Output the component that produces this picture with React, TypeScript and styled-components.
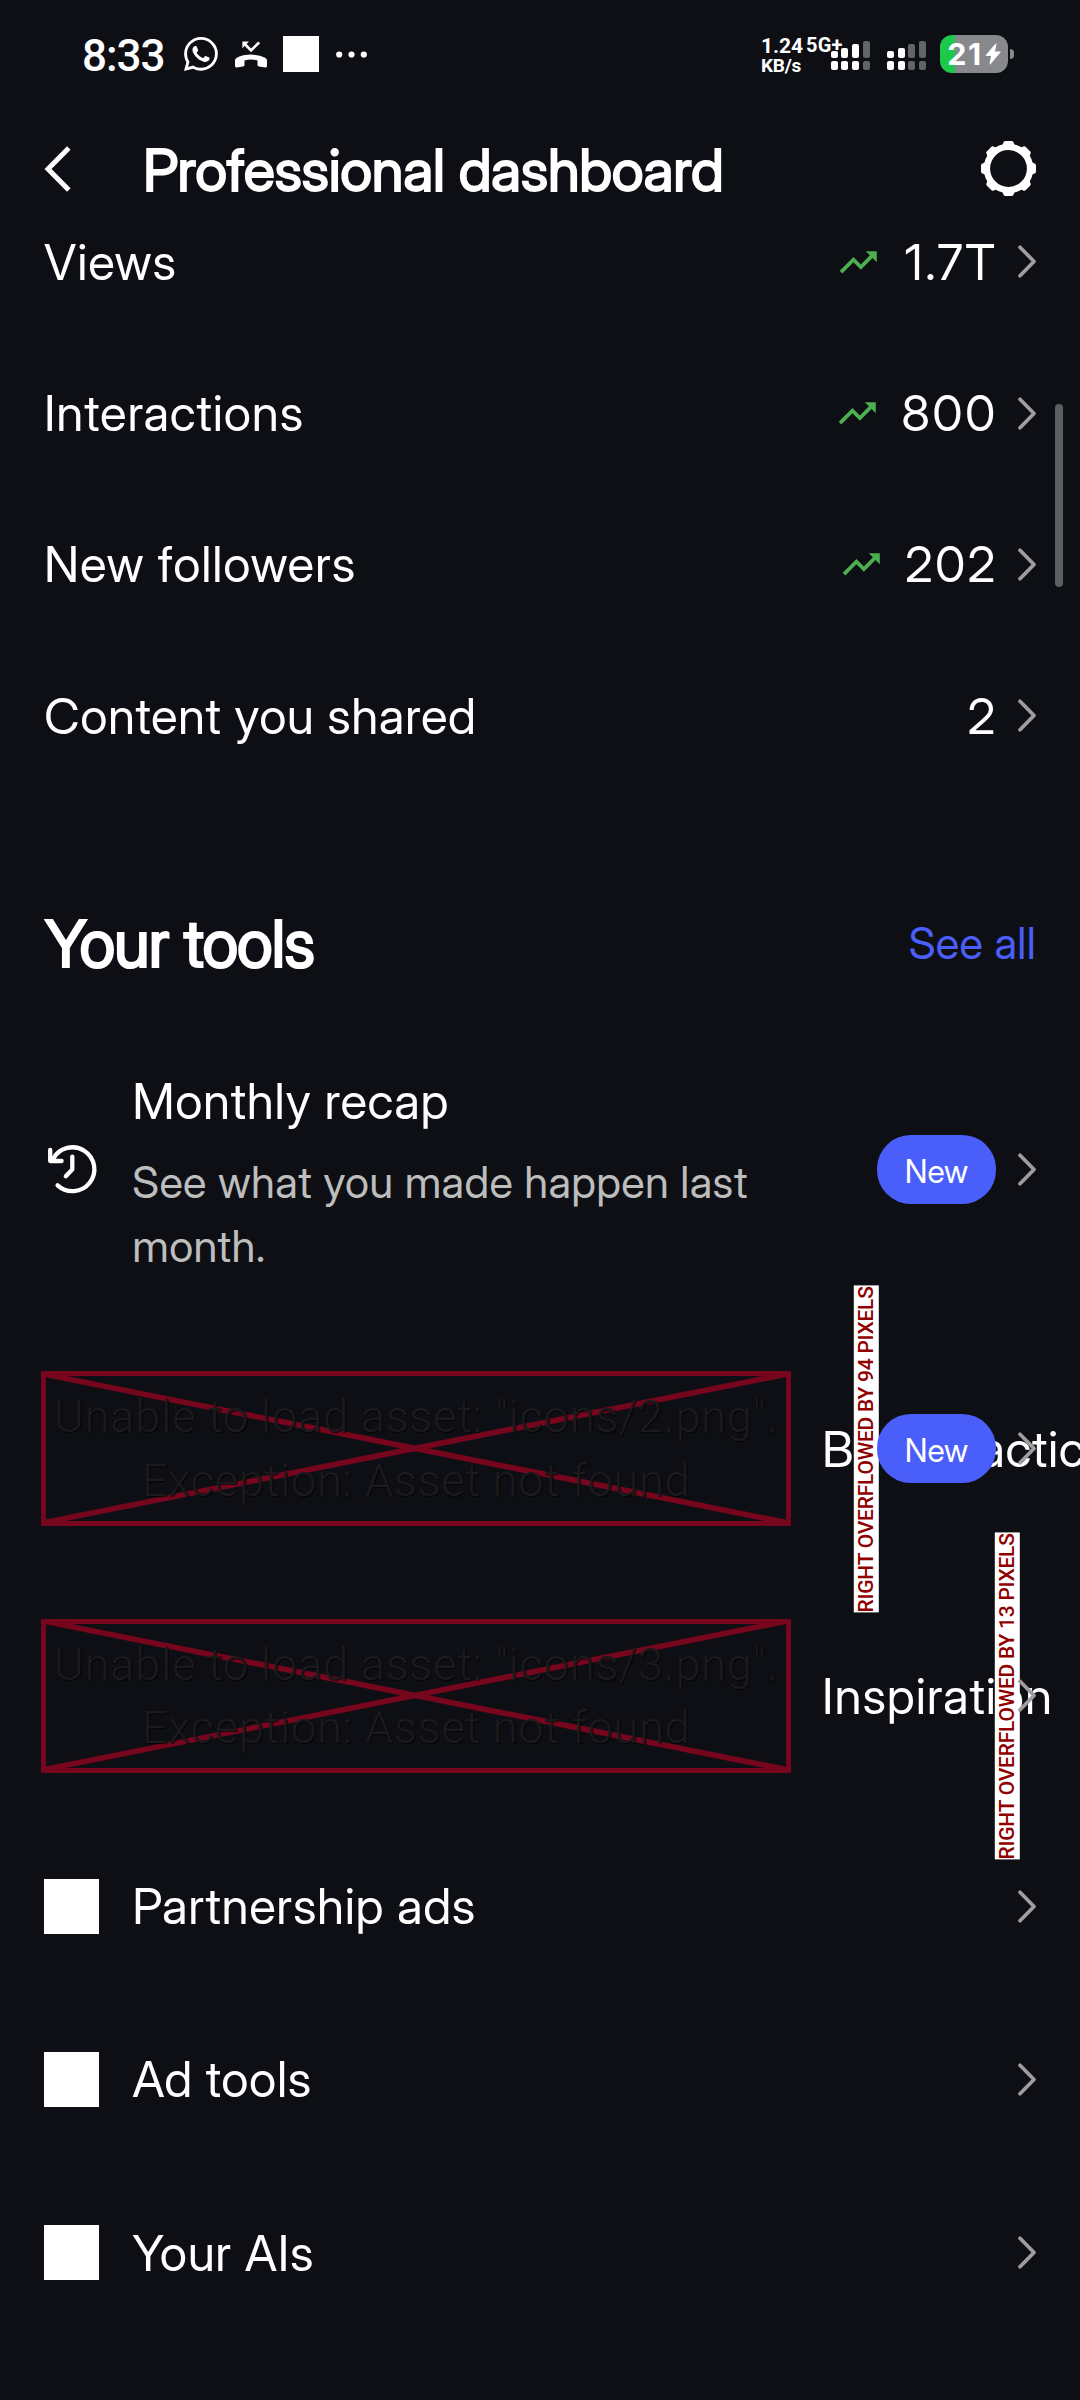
import React from 'react';
import styled, { createGlobalStyle } from 'styled-components';
import { MdTrendingUp } from 'react-icons/md';
import { BsWhatsapp } from 'react-icons/bs';

const GlobalStyle = createGlobalStyle`
  *, *::before, *::after { box-sizing: border-box; }
  html, body { margin: 0; padding: 0; background: #0d0f14; }
  svg { display: block; flex: none; }
`;

const sans = '"Inter Display", Inter, "Noto Sans", sans-serif';
const roboto = 'Roboto, "Noto Sans", sans-serif';

const Screen = styled.div`
  position: relative;
  display: flex;
  flex-direction: column;
  width: 1080px;
  height: 2400px;
  overflow: hidden;
  background: #0d0f14;
  color: #fff;
  font-family: ${sans};
`;

/* ---------- status bar ---------- */

const StatusBar = styled.div`
  display: flex;
  align-items: center;
  flex: none;
  height: 108px;
  padding: 0 66px 0 82px;
`;

const Time = styled.div`
  width: 102px;
  padding-top: 4px;
  font: 500 44px/52px ${roboto};
  letter-spacing: -1px;
`;

const Notifications = styled.div`
  display: flex;
  align-items: center;
  gap: 16.5px;
`;

const AppSquare = styled.div`
  width: 36px;
  height: 36px;
  background: #fff;
`;

const Indicators = styled.div`
  display: flex;
  align-items: center;
  margin-left: auto;
`;

const NetSpeed = styled.div`
  width: 45.2px;
  padding-top: 3px;
  font: 700 21px/20px ${roboto};
  white-space: nowrap;
`;

const SpeedUnit = styled.div`
  font-size: 19px;
  letter-spacing: -0.2px;
`;

const NetworkType = styled.div`
  width: 24.5px;
  margin-bottom: 18px;
  font: 700 20px/20px ${roboto};
  letter-spacing: 0.2px;
  white-space: nowrap;
`;

const Bars = styled.div`
  display: flex;
  align-items: flex-end;
  gap: 3.9px;
  height: 29px;
  margin: 2px 16.4px 0 0;

  & + & {
    margin-right: 13.7px;
  }
`;

const Bar = styled.div<{ $on: boolean }>`
  display: flex;
  flex-direction: column;
  gap: 3.3px;
  width: 7px;
  --tone: ${(p) => (p.$on ? '#fff' : '#636468')};
`;

const BarTop = styled.div<{ $h: number }>`
  height: ${(p) => p.$h}px;
  border-radius: 2px;
  background: var(--tone);
`;

const BarFoot = styled.div`
  height: 8.3px;
  border-radius: 2px;
  background: var(--tone);
`;

const Battery = styled.div`
  display: flex;
  align-items: center;
  justify-content: center;
  gap: 2px;
  width: 68px;
  height: 37.5px;
  border-radius: 12px;
  background: linear-gradient(90deg, #1cc94b 15px, #88898d 15px);
  font: 700 30.5px/36px Inter, sans-serif;
  letter-spacing: 1.6px;
`;

const BatteryTip = styled.div`
  width: 4.3px;
  height: 10px;
  margin-left: 1.7px;
  border-radius: 0 5px 5px 0;
  background: #88898d;
`;

/* ---------- header ---------- */

const Header = styled.header`
  display: flex;
  align-items: center;
  flex: none;
  height: 121px;
  padding: 0 44px;
`;

const Title = styled.h1`
  flex: 1;
  margin: 3px 0 0 72px;
  font-size: 58px;
  line-height: 70px;
  font-weight: 400;
  letter-spacing: -0.35px;
  -webkit-text-stroke: 1.8px #fff;
`;

/* ---------- content ---------- */

const Content = styled.main`
  display: flex;
  flex-direction: column;
  margin-top: -42.8px;
  padding: 0 44px;
`;

const MetricRow = styled.div`
  display: flex;
  align-items: center;
  height: 151.3px;
`;

const Label = styled.div<{ $tracking?: number }>`
  font-size: 49.5px;
  line-height: 72px;
  letter-spacing: ${(p) => p.$tracking ?? 0.6}px;
  white-space: nowrap;
`;

const Metric = styled.div`
  display: flex;
  align-items: center;
  gap: 20.5px;
  margin-left: auto;
  font-size: 49.5px;
  line-height: 60px;
  letter-spacing: 2.2px;
`;

const MetricValue = styled.span<{ $inset: number }>`
  padding-left: ${(p) => p.$inset}px;
`;

const SectionHead = styled.div`
  display: flex;
  align-items: center;
  justify-content: space-between;
  height: 222.3px;
  padding-top: 82.4px;
`;

const SectionTitle = styled.h2`
  margin: 0 0 0 1px;
  font-size: 65px;
  line-height: 78px;
  font-weight: 400;
  letter-spacing: -1px;
  -webkit-text-stroke: 2.1px #fff;
`;

const SeeAll = styled.a`
  color: #4a5ff9;
  font-size: 43.6px;
  line-height: 52px;
  letter-spacing: 0.34px;
`;

const ToolRow = styled.div<{ $h: number }>`
  position: relative;
  display: flex;
  align-items: center;
  gap: 33.5px;
  height: ${(p) => p.$h}px;
`;

const ToolText = styled.div<{ $lowered?: boolean }>`
  flex: 1;
  min-width: 0;
  padding-top: ${(p) => (p.$lowered ? 4.6 : 0)}px;
`;

const Description = styled.div`
  margin-top: 14px;
  color: #bdbdbd;
  font-size: 43.6px;
  line-height: 63.8px;
  letter-spacing: 0.32px;
`;

const Trailing = styled.div`
  position: relative;
  z-index: 2;
  display: flex;
  align-items: center;
  gap: 22px;
`;

const NewBadge = styled.div`
  width: 119px;
  height: 69px;
  padding-top: 3px;
  border-radius: 33.75px;
  background: #4a5ff9;
  font-size: 32px;
  line-height: 67px;
  text-align: center;
`;

const Placeholder = styled.div`
  flex: none;
  width: 54.8px;
  height: 55px;
  background: #fff;
`;

const BrokenAsset = styled.div`
  position: relative;
  flex: none;
  display: flex;
  flex-direction: column;
  align-items: center;
  justify-content: center;
  width: 750.2px;
  height: 154.4px;
  margin: 0 -2.8px;
  border: 5.6px solid #76061d;
  color: #1d1a1e;
  font: 300 45px/63.2px ${roboto};
  letter-spacing: 0.88px;
  white-space: nowrap;
  text-shadow: 1px 1px 1px rgba(0, 0, 0, 0.7);
`;

const CrossLines = styled.svg`
  position: absolute;
  inset: -2.8px;
  width: 744.6px;
  height: 148.8px;
`;

const AssetLine = styled.div`
  position: relative;
`;

const OverflowStrip = styled.div<{ $x: number }>`
  position: absolute;
  z-index: 1;
  left: ${(p) => p.$x - 44}px;
  top: 50%;
  width: 24.8px;
  height: 326.8px;
  transform: translateY(-50%) rotate(180deg);
  writing-mode: vertical-rl;
  background: #fff;
  color: #900000;
  font: 500 21px/24.8px ${roboto};
  letter-spacing: -0.24px;
  text-align: center;
  white-space: nowrap;
`;

const ScrollThumb = styled.div`
  position: absolute;
  left: 1055px;
  top: 404px;
  width: 8px;
  height: 183px;
  border-radius: 4px;
  background: #5d5e62;
`;

/* ---------- icons ---------- */

const Chevron = () => (
  <svg width="18" height="33" viewBox="0 0 18 33" fill="none" stroke="#9e9e9e" strokeWidth="3.7" strokeLinecap="round" strokeLinejoin="round">
    <path d="M2 2.2 16 16.5 2 30.8" />
  </svg>
);

const BackIcon = () => (
  <svg width="27" height="46" viewBox="0 0 27 46" fill="none" stroke="#fff" strokeWidth="5">
    <path d="M24.8 2 4 23l20.8 21" />
  </svg>
);

const GearIcon = () => (
  <svg width="55" height="55" viewBox="-27.5 -27.5 55 55" fill="#fff">
    <circle r="21.6" fill="none" stroke="#fff" strokeWidth="6.4" />
    {[0, 45, 90, 135, 180, 225, 270, 315].map((a) => (
      <path key={a} transform={`rotate(${a})`} d="M-7.5-22.5Q-5.5-23.5-5.3-25.5-5-27.5-3-27.5H3Q5-27.5 5.3-25.5 5.5-23.5 7.5-22.5V-20H-7.5Z" />
    ))}
  </svg>
);

const MissedCallIcon = () => (
  <svg width="32" height="27" viewBox="0 0 32 27" fill="#fff">
    <path d="M0 19.5Q0 17.6 1.8 16.7 8 13.6 16 13.6T30.2 16.7Q32 17.6 32 19.5V25Q32 26.6 30.4 26.4L24 25.6Q22.5 25.4 22.5 24V19.6Q16 17.6 9.5 19.6V24Q9.5 25.4 8 25.6L1.6 26.4Q0 26.6 0 25Z" />
    <path d="M7.4.6H14L7.4 7.2Z" />
    <path d="M9.5 2.8 16 9.4 24.2 1.4" fill="none" stroke="#fff" strokeWidth="2.7" />
  </svg>
);

const MoreDots = () => (
  <svg width="31" height="7" viewBox="0 0 31 7" fill="#fff">
    <circle cx="3.2" cy="3.5" r="3.1" />
    <circle cx="15.5" cy="3.5" r="3.1" />
    <circle cx="27.8" cy="3.5" r="3.1" />
  </svg>
);

const BoltIcon = () => (
  <svg width="16" height="22" viewBox="0 0 16 22" fill="#fff" stroke="#fff" strokeWidth="1" strokeLinejoin="round">
    <path d="M11 .8 1 12.4H6.6L5 21.2 15.3 9H9.4Z" />
  </svg>
);

const HistoryIcon = () => (
  <svg width="54.8" height="55" viewBox="0 0 54.8 55" fill="none" stroke="#fff" strokeWidth="4.3" strokeLinecap="round" strokeLinejoin="round">
    <path d="M7 18.8Q8 18 9.3 16.6A21.9 21.9 0 1 1 13.6 43.3" />
    <path d="M6.2 8V19H17.6" />
    <path d="M28.3 14.6V27.6L21.8 34.2" />
  </svg>
);

/* ---------- pieces ---------- */

const barHeights = [7.3, 10.3, 13.6, 17.3];

const Signal = ({ level }: { level: number }) => (
  <Bars>
    {barHeights.map((h, i) => (
      <Bar key={h} $on={i < level}>
        <BarTop $h={h} />
        <BarFoot />
      </Bar>
    ))}
  </Bars>
);

const Broken = ({ file }: { file: string }) => (
  <BrokenAsset>
    <CrossLines viewBox="0 0 744.6 148.8" stroke="#76061d" strokeWidth="5.6">
      <path d="M0 0 744.6 148.8M744.6 0 0 148.8" />
    </CrossLines>
    <AssetLine>{`Unable to load asset: "${file}".`}</AssetLine>
    <AssetLine>Exception: Asset not found</AssetLine>
  </BrokenAsset>
);

const metrics = [
  { label: 'Views', value: '1.7T', up: true, inset: 4, tracking: 0.8 },
  { label: 'Interactions', value: '800', up: true, inset: 1, tracking: 0.84 },
  { label: 'New followers', value: '202', up: true, inset: 1, tracking: 0.84 },
  { label: 'Content you shared', value: '2', up: false, inset: 0, tracking: 0.5 },
];

const simpleTools = ['Partnership ads', 'Ad tools', 'Your AIs'];

export default function App() {
  return (
    <>
      <GlobalStyle />
      <Screen>
        <StatusBar>
          <Time>8:33</Time>
          <Notifications>
            <BsWhatsapp size={34} />
            <MissedCallIcon />
            <AppSquare />
            <MoreDots />
          </Notifications>
          <Indicators>
            <NetSpeed>
              1.24
              <SpeedUnit>KB/s</SpeedUnit>
            </NetSpeed>
            <NetworkType>5G+</NetworkType>
            <Signal level={3} />
            <Signal level={2} />
            <Battery>
              <span>21</span>
              <BoltIcon />
            </Battery>
            <BatteryTip />
          </Indicators>
        </StatusBar>

        <Header>
          <BackIcon />
          <Title>Professional dashboard</Title>
          <GearIcon />
        </Header>

        <Content>
          {metrics.map((m) => (
            <MetricRow key={m.label}>
              <Label $tracking={m.tracking}>{m.label}</Label>
              <Metric>
                {m.up && <MdTrendingUp size={44.5} color="#4caf50" />}
                <MetricValue $inset={m.inset}>{m.value}</MetricValue>
                <Chevron />
              </Metric>
            </MetricRow>
          ))}

          <SectionHead>
            <SectionTitle>Your tools</SectionTitle>
            <SeeAll>See all</SeeAll>
          </SectionHead>

          <ToolRow $h={311.2}>
            <HistoryIcon />
            <ToolText $lowered>
              <Label>Monthly recap</Label>
              <Description>See what you made happen last month.</Description>
            </ToolText>
            <Trailing>
              <NewBadge>New</NewBadge>
              <Chevron />
            </Trailing>
          </ToolRow>

          <ToolRow $h={247.3}>
            <Broken file="icons/2.png" />
            <ToolText>
              <Label>Best practices</Label>
            </ToolText>
            <OverflowStrip $x={853.7}>RIGHT OVERFLOWED BY 94 PIXELS</OverflowStrip>
            <Trailing>
              <NewBadge>New</NewBadge>
              <Chevron />
            </Trailing>
          </ToolRow>

          <ToolRow $h={247.3}>
            <Broken file="icons/3.png" />
            <ToolText>
              <Label $tracking={0.9}>Inspiration</Label>
            </ToolText>
            <OverflowStrip $x={995}>RIGHT OVERFLOWED BY 13 PIXELS</OverflowStrip>
            <Trailing>
              <Chevron />
            </Trailing>
          </ToolRow>

          {simpleTools.map((name) => (
            <ToolRow key={name} $h={173.3}>
              <Placeholder />
              <ToolText>
                <Label>{name}</Label>
              </ToolText>
              <Trailing>
                <Chevron />
              </Trailing>
            </ToolRow>
          ))}
        </Content>

        <ScrollThumb />
      </Screen>
    </>
  );
}
